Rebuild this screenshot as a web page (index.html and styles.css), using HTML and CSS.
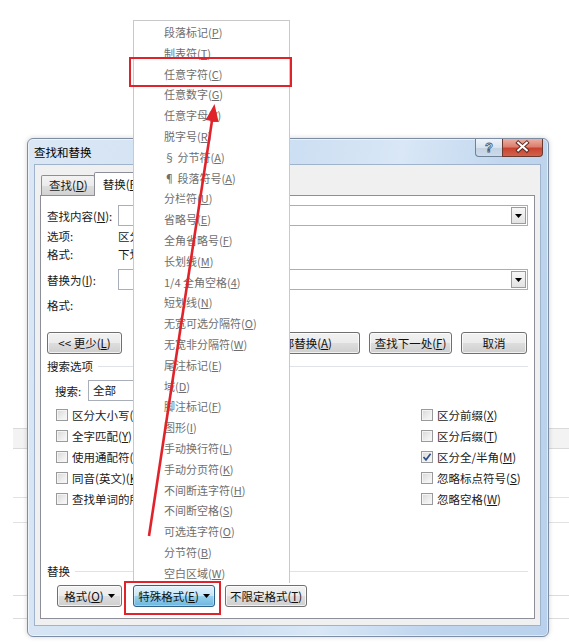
FILE: index.html
```html
<!DOCTYPE html>
<html lang="zh-CN">
<head>
<meta charset="utf-8">
<title>查找和替换</title>
<link rel="stylesheet" href="styles.css">
</head>
<body>
<div class="dialog">
  <div class="titlebar">
    <span class="title">查找和替换</span>
    <div class="caption">
      <div class="cap-help">?</div>
      <div class="cap-close">
        <svg width="41" height="18" viewBox="0 0 41 18">
          <path d="M16 4.5 L25 12.5 M25 4.5 L16 12.5" stroke="#5a2a22" stroke-width="4.2" stroke-linecap="square" fill="none"/>
          <path d="M16 4.5 L25 12.5 M25 4.5 L16 12.5" stroke="#ffffff" stroke-width="2.2" stroke-linecap="square" fill="none"/>
        </svg>
      </div>
    </div>
  </div>
  <div class="client">
    <div class="tabs">
      <div class="tab">查找(<u>D</u>)</div>
      <div class="tab active">替换(<u>P</u>)</div>
    </div>
    <div class="panel">
      <div class="row-field">
        <span class="lbl">查找内容(<u>N</u>):</span>
        <div class="combo"><span class="dd"><svg width="7" height="4" viewBox="0 0 7 4"><path d="M0 0 H7 L3.5 4 Z" fill="#000"/></svg></span></div>
      </div>
      <div class="row-info first"><span class="lbl">选项:</span><span class="clip-val">区分全/半角</span></div>
      <div class="row-info"><span class="lbl">格式:</span><span class="clip-val">下划线</span></div>
      <div class="row-field second">
        <span class="lbl">替换为(<u>I</u>):</span>
        <div class="combo"><span class="dd"><svg width="7" height="4" viewBox="0 0 7 4"><path d="M0 0 H7 L3.5 4 Z" fill="#000"/></svg></span></div>
      </div>
      <div class="row-info fmt2"><span class="lbl">格式:</span></div>
      <div class="btnrow">
        <div class="btn w-less">&lt;&lt; 更少(<u>L</u>)</div>
        <div class="btngroup">
          <div class="btn w-all"><span class="nowrap">全部替换(<u>A</u>)</span></div>
          <div class="btn w-next">查找下一处(<u>F</u>)</div>
          <div class="btn w-cancel">取消</div>
        </div>
      </div>
      <div class="section s-search"><span>搜索选项</span><span class="sep"></span></div>
      <div class="search-row">
        <span class="search-lbl">搜索<u>:</u></span>
        <div class="select">全部</div>
      </div>
      <div class="checks">
        <div class="chk left"><span class="box"></span><span class="txt">区分大小写(<u>H</u>)</span></div>
        <div class="chk"><span class="box"></span><span class="txt">区分前缀(<u>X</u>)</span></div>
        <div class="chk left"><span class="box"></span><span class="txt">全字匹配(<u>Y</u>)</span></div>
        <div class="chk"><span class="box"></span><span class="txt">区分后缀(<u>T</u>)</span></div>
        <div class="chk left"><span class="box"></span><span class="txt">使用通配符(<u>U</u>)</span></div>
        <div class="chk"><span class="box checked"><svg width="10" height="10" viewBox="0 0 10 10"><path d="M1.5 5 L4 7.8 L8.6 1.8" stroke="#2f4f8a" stroke-width="1.7" fill="none"/></svg></span><span class="txt">区分全/半角(<u>M</u>)</span></div>
        <div class="chk left"><span class="box"></span><span class="txt">同音(英文)(<u>K</u>)</span></div>
        <div class="chk"><span class="box"></span><span class="txt">忽略标点符号(<u>S</u>)</span></div>
        <div class="chk left"><span class="box"></span><span class="txt">查找单词的所有形式(英文)(<u>W</u>)</span></div>
        <div class="chk"><span class="box"></span><span class="txt">忽略空格(<u>W</u>)</span></div>
      </div>
      <div class="bottom">
        <div class="section"><span>替换</span><span class="sep"></span></div>
        <div class="bottom-btns">
          <div class="btn w-fmt">格式(<u>O</u>) <svg class="tri" width="7" height="4" viewBox="0 0 7 4"><path d="M0 0 H7 L3.5 4 Z" fill="#000"/></svg></div>
          <div class="btn pressed w-spec">特殊格式(<u>E</u>) <svg class="tri" width="7" height="4" viewBox="0 0 7 4"><path d="M0 0 H7 L3.5 4 Z" fill="#000"/></svg></div>
          <div class="btn w-nofmt">不限定格式(<u>T</u>)</div>
        </div>
      </div>
    </div>
  </div>
</div>

<div class="menu">
  <div class="mi">段落标记(<u>P</u>)</div>
  <div class="mi">制表符(<u>T</u>)</div>
  <div class="mi">任意字符(<u>C</u>)</div>
  <div class="mi">任意数字(<u>G</u>)</div>
  <div class="mi">任意字母(<u>Y</u>)</div>
  <div class="mi">脱字号(<u>R</u>)</div>
  <div class="mi">§ 分节符(<u>A</u>)</div>
  <div class="mi">¶ 段落符号(<u>A</u>)</div>
  <div class="mi">分栏符(<u>U</u>)</div>
  <div class="mi">省略号(<u>E</u>)</div>
  <div class="mi">全角省略号(<u>F</u>)</div>
  <div class="mi">长划线(<u>M</u>)</div>
  <div class="mi">1/4 全角空格(<u>4</u>)</div>
  <div class="mi">短划线(<u>N</u>)</div>
  <div class="mi">无宽可选分隔符(<u>O</u>)</div>
  <div class="mi">无宽非分隔符(<u>W</u>)</div>
  <div class="mi">尾注标记(<u>E</u>)</div>
  <div class="mi">域(<u>D</u>)</div>
  <div class="mi">脚注标记(<u>F</u>)</div>
  <div class="mi">图形(<u>I</u>)</div>
  <div class="mi">手动换行符(<u>L</u>)</div>
  <div class="mi">手动分页符(<u>K</u>)</div>
  <div class="mi">不间断连字符(<u>H</u>)</div>
  <div class="mi">不间断空格(<u>S</u>)</div>
  <div class="mi">可选连字符(<u>O</u>)</div>
  <div class="mi">分节符(<u>B</u>)</div>
  <div class="mi">空白区域(<u>W</u>)</div>
</div>

<svg class="annot" width="569" height="643" viewBox="0 0 569 643">
  <rect x="130" y="58" width="161" height="28" fill="none" stroke="#e0232a" stroke-width="2"/>
  <rect x="125" y="582" width="95" height="32" fill="none" stroke="#e0232a" stroke-width="2"/>
  <line x1="149" y1="536" x2="212.1" y2="120" stroke="#e0232a" stroke-width="2.6"/>
  <polygon points="214.5,104 218.6,122 205.6,120" fill="#e0232a"/>
</svg>
</body>
</html>
```

FILE: styles.css
```css
html, body {
  margin: 0;
  padding: 0;
}

body {
  width: 569px;
  height: 643px;
  overflow: hidden;
  position: relative;
  font-family: "Noto Sans CJK SC", "Microsoft YaHei", "Liberation Sans", sans-serif;
  font-size: 11.5px;
  color: #1a1a1a;
  background:
    linear-gradient(#dadada, #dadada) 13px 428px / 556px 1px no-repeat,
    linear-gradient(#f3f3f3, #f3f3f3) 13px 429px / 556px 19px no-repeat,
    linear-gradient(#dadada, #dadada) 13px 448px / 556px 1px no-repeat,
    linear-gradient(#e2e2e2, #e2e2e2) 13px 497px / 556px 1px no-repeat,
    linear-gradient(#e2e2e2, #e2e2e2) 13px 522px / 556px 1px no-repeat,
    linear-gradient(#dcdcdc, #dcdcdc) 13px 595px / 556px 1px no-repeat,
    linear-gradient(#dcdcdc, #dcdcdc) 13px 618px / 556px 1px no-repeat,
    #ffffff;
}

u {
  text-decoration: underline;
  text-underline-offset: 1px;
}

.nowrap {
  white-space: nowrap;
  flex: none;
}

/* ---------- window ---------- */
.dialog {
  position: absolute;
  left: 27px;
  top: 138px;
  width: 522px;
  height: 499px;
  box-sizing: border-box;
  border: 1px solid #7d8ea4;
  border-radius: 6px;
  padding: 0 7px 10px 6px;
  display: flex;
  flex-direction: column;
  background: linear-gradient(100deg, #dbe7f5 0%, #cddff2 45%, #d9e7f6 62%, #c0d6ee 80%, #b9d1ec 100%);
  box-shadow: inset 0 0 0 1px rgba(255, 255, 255, 0.55), 0 0 5px rgba(0, 0, 0, 0.18);
}

.titlebar {
  height: 25px;
  display: flex;
  align-items: flex-start;
  margin-right: -2px;
}

.title {
  flex: 1;
  align-self: center;
  font-size: 11.5px;
  color: #000;
  line-height: 16px;
  padding-top: 1px;
}

.caption {
  display: flex;
  height: 18px;
}

.cap-help {
  width: 27px;
  height: 18px;
  box-sizing: border-box;
  border: 1px solid #6f8197;
  border-top: none;
  border-right: none;
  border-radius: 0 0 0 4px;
  background: linear-gradient(#eef3f9 0%, #d9e3ef 50%, #c3d1e2 51%, #ccdbeb 100%);
  display: flex;
  align-items: center;
  justify-content: center;
  font-family: "Liberation Sans", sans-serif;
  font-weight: bold;
  font-size: 13px;
  color: #ffffff;
  -webkit-text-stroke: 0.9px #4f5d70;
  line-height: 1;
}

.cap-close {
  width: 41px;
  height: 18px;
  box-sizing: border-box;
  border: 1px solid #6a3a31;
  border-top: none;
  border-radius: 0 0 4px 0;
  background: linear-gradient(#eab0a3 0%, #dd7f6f 45%, #c8432f 55%, #d2624d 100%);
  display: flex;
  align-items: center;
  justify-content: center;
}

.cap-close svg {
  display: block;
  margin-top: -1px;
}

.client {
  flex: 1;
  display: flex;
  flex-direction: column;
  background: #f0f0f0;
  border: 1px solid #9fb3cc;
  padding: 7px 5px 6px 5px;
  min-height: 0;
}

/* ---------- tabs ---------- */
.tabs {
  display: flex;
  align-items: flex-end;
  padding-left: 1px;
  position: relative;
  z-index: 2;
}

.tab {
  height: 20px;
  box-sizing: border-box;
  padding: 0 6px 0 7px;
  border: 1px solid #8c8f97;
  border-bottom: none;
  border-radius: 2px 2px 0 0;
  background: linear-gradient(#f3f3f3 0%, #ebebeb 50%, #dedede 51%, #d2d2d2 100%);
  line-height: 19px;
  white-space: nowrap;
}

.tab.active {
  width: 42px;
  height: 24px;
  overflow: hidden;
  margin-bottom: -1px;
  margin-left: -1px;
  padding: 2px 0 0 8px;
  background: #ffffff;
  position: relative;
  z-index: 2;
}

/* ---------- panel ---------- */
.panel {
  flex: 1;
  display: flex;
  flex-direction: column;
  background: #ffffff;
  border: 1px solid #8c8f97;
  padding: 9px 6px 11px 6px;
  min-height: 0;
}

.lbl {
  width: 71px;
  flex: none;
  white-space: nowrap;
}

.row-field {
  display: flex;
  align-items: center;
  height: 21px;
}

.row-field.second {
  margin-top: 6px;
}

.combo {
  flex: 1;
  height: 21px;
  box-sizing: border-box;
  border: 1px solid #a8afb8;
  background: #ffffff;
  display: flex;
  justify-content: flex-end;
  padding: 1px;
}

.dd {
  width: 15px;
  box-sizing: border-box;
  border: 1px solid #9c9c9c;
  background: linear-gradient(#f7f7f7, #e3e3e3);
  display: flex;
  align-items: center;
  justify-content: center;
}

.dd svg {
  display: block;
}

.row-info {
  display: flex;
  height: 17px;
  line-height: 17px;
  margin-top: 1px;
  white-space: nowrap;
}

.row-info.first {
  margin-top: 2px;
}

.row-info.fmt2 {
  margin-top: 7px;
}

.clip-val {
  width: 15px;
  overflow: hidden;
}

/* ---------- buttons ---------- */
.btnrow {
  display: flex;
  margin-top: 18px;
  margin-right: 1px;
}

.btngroup {
  margin-left: auto;
  display: flex;
  gap: 9px;
}

.btn {
  height: 22px;
  box-sizing: border-box;
  border: 1px solid #707070;
  border-radius: 3px;
  background: linear-gradient(#f2f2f2 0%, #ebebeb 50%, #dddddd 51%, #cfcfcf 100%);
  box-shadow: inset 0 0 0 1px rgba(255, 255, 255, 0.7);
  display: flex;
  align-items: center;
  justify-content: center;
  white-space: nowrap;
  line-height: 20px;
  color: #111;
}

.btn .tri {
  margin-left: 4px;
}

.btn.pressed {
  border-color: #2c628b;
  background: linear-gradient(#e5f4fc 0%, #c4e5f6 50%, #98d1ef 51%, #6cb6dd 100%);
  box-shadow: inset 0 0 0 1px rgba(255, 255, 255, 0.35);
}

.w-less { width: 75px; }
.w-all {
  width: 71px;
  justify-content: flex-end;
  padding-right: 27px;
  overflow: hidden;
  border-left: none;
  border-radius: 0 3px 3px 0;
}
.w-next { width: 83px; }
.w-cancel { width: 66px; }
.w-fmt { width: 65px; }
.w-spec { width: 82px; }
.w-nofmt { width: 82px; }

/* ---------- sections ---------- */
.section {
  display: flex;
  align-items: center;
  height: 17px;
  line-height: 17px;
  white-space: nowrap;
}

.s-search {
  margin-top: 4px;
}

.sep {
  flex: 1;
  height: 0;
  border-top: 1px solid #dfe3e8;
  margin-left: 5px;
}

.search-row {
  display: flex;
  align-items: center;
  margin-top: 5px;
  padding-left: 8px;
  height: 21px;
}

.search-lbl {
  width: 33px;
  flex: none;
}

.search-lbl u {
  text-decoration: none;
}

.select {
  width: 46px;
  height: 21px;
  box-sizing: border-box;
  border: 1px solid #a8afb8;
  border-right: none;
  background: #ffffff;
  padding-left: 4px;
  line-height: 19px;
  white-space: nowrap;
}

.checks {
  display: grid;
  grid-template-columns: 365px auto;
  grid-auto-rows: 21px;
  margin-top: 3px;
  padding-left: 9px;
}

.chk {
  display: flex;
  align-items: center;
  gap: 4px;
  white-space: nowrap;
}

.chk.left .txt {
  max-width: 61px;
  overflow: hidden;
}

.box {
  width: 12px;
  height: 12px;
  flex: none;
  box-sizing: border-box;
  border: 1px solid #999a9b;
  background: linear-gradient(135deg, #d7d7d7 0%, #eeeeee 60%, #fafafa 100%);
  box-shadow: inset 0 0 0 1px #f4f4f4;
  display: flex;
  align-items: center;
  justify-content: center;
}

.box.checked svg {
  display: block;
}

.bottom {
  margin-top: auto;
}

.bottom-btns {
  display: flex;
  margin-top: 5px;
  padding-left: 10px;
}

.bottom-btns .w-spec {
  margin-left: 11px;
}

.bottom-btns .w-nofmt {
  margin-left: 10px;
}

/* ---------- dropdown menu ---------- */
.menu {
  position: absolute;
  left: 133px;
  top: 20px;
  width: 157px;
  height: 563px;
  box-sizing: border-box;
  background: #ffffff;
  border: 1px solid #c9c9c9;
  border-bottom: none;
  padding-top: 1px;
  z-index: 5;
  overflow: hidden;
}

.mi {
  height: 20.8px;
  line-height: 20.8px;
  padding-left: 30px;
  font-size: 11px;
  color: #6e6e6e;
  white-space: nowrap;
}

/* ---------- annotations ---------- */
.annot {
  position: absolute;
  left: 0;
  top: 0;
  z-index: 10;
  pointer-events: none;
}
```
